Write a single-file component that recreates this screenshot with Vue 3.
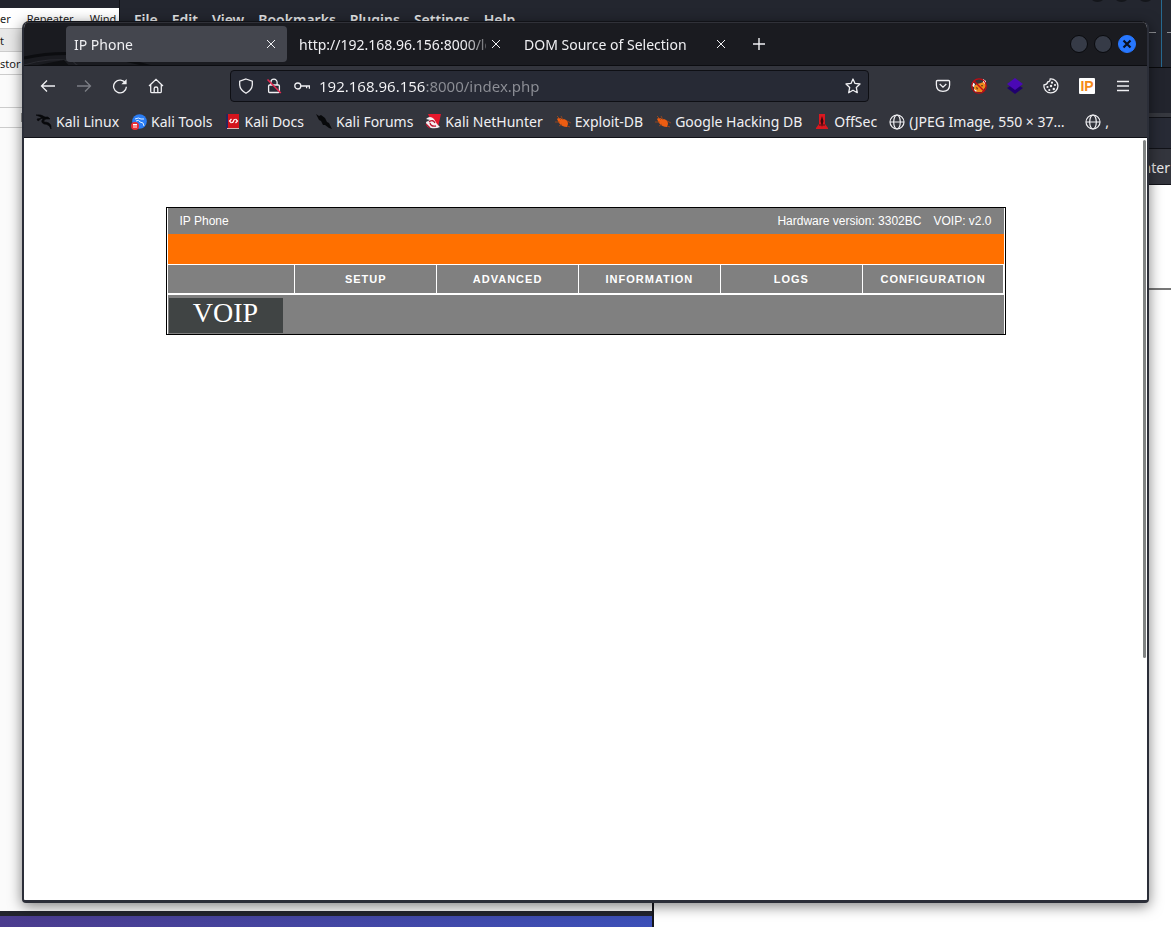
<script setup>
import { ref } from 'vue'

const address = ref('192.168.96.156:8000/index.php')
const tabs = [
  { title: 'IP Phone', active: true },
  { title: 'http://192.168.96.156:8000/lo', active: false },
  { title: 'DOM Source of Selection', active: false }
]
const bookmarks = [
  { label: 'Kali Linux', icon: 'dragon' },
  { label: 'Kali Tools', icon: 'tools' },
  { label: 'Kali Docs', icon: 'docs' },
  { label: 'Kali Forums', icon: 'forums' },
  { label: 'Kali NetHunter', icon: 'hunter' },
  { label: 'Exploit-DB', icon: 'bug' },
  { label: 'Google Hacking DB', icon: 'bug' },
  { label: 'OffSec', icon: 'offsec' },
  { label: '(JPEG Image, 550 × 37…', icon: 'globe', long: true },
  { label: ',', icon: 'globe' }
]
const terminalMenu = ['File', 'Edit', 'View', 'Bookmarks', 'Plugins', 'Settings', 'Help']
const phoneMenu = ['SETUP', 'ADVANCED', 'INFORMATION', 'LOGS', 'CONFIGURATION']
</script>

<template>
  <div class="desktop">
    <section class="terminal">
      <div class="terminal-dots"><i></i><i></i><i></i></div>
      <nav class="terminal-menu">
        <a v-for="m in terminalMenu" :key="m" href="#">{{ m }}</a>
      </nav>
      <div class="terminal-rule"></div>
    </section>

    <section class="proxy">
      <div class="proxy-title"></div>
      <div class="proxy-menu"><span>er</span><span>Repeater</span><span>Wind</span></div>
      <div class="proxy-row shaded">t</div>
      <div class="proxy-row sub">stor</div>
      <div class="proxy-row tall"></div>
      <div class="proxy-row short"><i></i></div>
    </section>

    <section class="rear">
      <div class="rear-tabs"></div>
      <div class="rear-nav"></div>
      <div class="rear-marks">nter</div>
      <div class="rear-page"></div>
    </section>

    <main class="browser">
      <header class="tabbar">
        <svg class="wallpaper" viewBox="0 0 190 42" width="190" height="42" fill="none">
          <path d="M0 35Q28 29 56 31Q92 33 128 44" stroke="#0c0d10" stroke-width="3" />
          <path d="M0 42Q26 34 48 38L56 44M43 31L54 44" stroke="#2a2b31" stroke-width="1" />
          <path d="M4 44L40 37L46 44Z" fill="#0e0f12" />
        </svg>
        <div v-for="t in tabs" :key="t.title" class="tab" :class="{ active: t.active }">
          <button class="tab-title">{{ t.title }}</button>
          <button class="tab-close" aria-label="Close tab">
            <svg viewBox="0 0 10 10" width="10" height="10"><path d="M1 1L9 9M9 1L1 9" stroke="currentColor" stroke-width="1" /></svg>
          </button>
        </div>
        <button class="new-tab" aria-label="New tab">
          <svg viewBox="0 0 14 14" width="14" height="14"><path d="M7 1V13M1 7H13" stroke="currentColor" stroke-width="1.4" /></svg>
        </button>
        <div class="window-buttons">
          <button aria-label="Minimize"></button>
          <button aria-label="Maximize"></button>
          <button class="close" aria-label="Close">
            <svg viewBox="0 0 10 10" width="10" height="10"><path d="M1.500 1.500L8.500 8.500M8.500 1.500L1.500 8.500" stroke="#0a1020" stroke-width="2.200" /></svg>
          </button>
        </div>
      </header>

      <div class="toolbar">
        <div class="nav-buttons">
          <button aria-label="Back"><svg viewBox="0 0 16 16"><path d="M15 8H1.5M7 2.5L1.5 8L7 13.5" /></svg></button>
          <button aria-label="Forward" class="dim"><svg viewBox="0 0 16 16"><path d="M1 8H14.500M9 2.500L14.500 8L9 13.500" /></svg></button>
          <button aria-label="Reload"><svg viewBox="0 0 16 16"><path d="M13.600 5.400A6.400 6.400 0 1 0 14.400 8.800" /><path d="M14.600 1V6.200H9.400Z" fill="currentColor" stroke="none" /></svg></button>
          <button aria-label="Home"><svg viewBox="0 0 16 16"><path d="M1 8L8 1.300L15 8M2.700 6.800V13.500Q2.700 14.700 3.900 14.700H12.100Q13.300 14.700 13.300 13.500V6.800M6.200 14.500V10.500Q6.200 9 8 9Q9.800 9 9.800 10.500V14.500" /></svg></button>
        </div>
        <div class="urlbar">
          <svg viewBox="0 0 16 16"><path d="M8 1L14.300 3.200V7Q14 12 8 15.200Q2 12 1.700 7V3.200Z" /></svg>
          <svg viewBox="0 0 16 16"><path d="M4.900 7V4.300A3.100 3.100 0 0 1 11.100 4.300V7M3.600 7H12.400Q13.400 7 13.400 8V13.400Q13.400 14.500 12.400 14.500H3.600Q2.600 14.500 2.600 13.400V8Q2.600 7 3.600 7Z" /><path d="M1.500 1.500L14.800 15" stroke="#e22850" stroke-width="1.600" /></svg>
          <svg viewBox="0 0 16 16"><circle cx="3.800" cy="8" r="3" /><path d="M6.800 8H15.400V10.700M12.600 8V10.300" /></svg>
          <input v-model="address" class="address" aria-label="Address" spellcheck="false" />
          <button class="star" aria-label="Bookmark this page"><svg viewBox="0 0 16 16"><path d="M8 1L10 5.400L15 6L11.300 9.400L12.300 14.700L8 12.200L3.700 14.700L4.700 9.400L1 6L6 5.400Z" stroke-linejoin="round" /></svg></button>
        </div>
        <div class="extensions">
          <button aria-label="Pocket"><svg viewBox="0 0 16 16"><path d="M2.500 2.500H13.500Q14.600 2.500 14.600 3.600V7Q14.600 13.300 8 13.300Q1.400 13.300 1.400 7V3.600Q1.400 2.500 2.500 2.500ZM4.700 6L8 9.100L11.300 6" /></svg></button>
          <button aria-label="Fox">
            <svg viewBox="0 0 16 16"><path d="M3 8L6 6L10 5L14 3L15 8L11 14L6 14L3 12Z" fill="#f08a1c" stroke="none" /><path d="M1 4L4 6L3 9L1 8ZM12 1L15 3L15 7L12 4ZM3 11L6 13L4 14Z" fill="#fff" stroke="none" /><path d="M5 9L7 10L6 12ZM10 7L12 7L11 9Z" fill="#56331c" stroke="none" /><circle cx="8" cy="8" r="7.200" stroke="#c20b12" stroke-width="1.300" /><path d="M3 3L13 13" stroke="#c20b12" stroke-width="1.400" /></svg>
          </button>
          <button aria-label="Layers"><svg viewBox="0 0 16 16"><path d="M0 10L8 5L16 10L8 16Z" fill="#20006e" stroke="none" /><path d="M0 6L8 0L16 6L8 12Z" fill="#4a08b5" stroke="none" /></svg></button>
          <button aria-label="Cookies"><svg viewBox="0 0 16 16"><path d="M7.200 1Q7.300 3.600 4.700 3.900Q4.300 6.500 1 6.900A7 7 0 1 0 7.200 1Z" /><g fill="currentColor" stroke="none"><circle cx="9" cy="4.700" r="1.100" /><circle cx="12" cy="7" r="1.100" /><circle cx="8" cy="8" r="1.200" /><circle cx="4.500" cy="9" r="1.100" /><circle cx="6.300" cy="12" r="1.100" /><circle cx="10.800" cy="11" r="1.200" /></g></svg></button>
          <button class="ip-badge" aria-label="IP lookup"><span>IP</span></button>
          <button aria-label="Menu"><svg viewBox="0 0 16 16"><path d="M2 3.500H14M2 8H14M2 12.500H14" /></svg></button>
        </div>
      </div>

      <nav class="bookmarks">
        <a v-for="b in bookmarks" :key="b.label" href="#" :class="{ long: b.long }">
          <svg v-if="b.icon === 'dragon'" viewBox="0 0 16 16"><path d="M0 1Q5 0 9 3L12 3L14 5L10 5Q7 6 8 8Q14 8 15 12L15 15Q13 10 8 10Q4 8 7 5Q4 2 0 1ZM1 5L6 4L2 7Z" fill="#08090b" stroke="#08090b" stroke-width=".6" /></svg>
          <svg v-else-if="b.icon === 'tools'" viewBox="0 0 16 16"><circle cx="8.500" cy="7.500" r="7.300" fill="#2a7df5" /><path d="M4 5Q8 3 10 5L13 5M5 7Q8 5 9 8Q13 8 13 12" fill="none" stroke="#dcecff" stroke-width="1" /><circle cx="4" cy="12" r="4" fill="#ec2b32" /><path d="M2 10.500H6M3 10.500V14M5 10.500V14" fill="none" stroke="#fff" /></svg>
          <svg v-else-if="b.icon === 'docs'" viewBox="0 0 16 16"><path d="M1 0H4V15H1Z" fill="#26265d" /><path d="M3 0H14V14H3Z" fill="#d5141d" /><path d="M2 14H14V15H2Z" fill="#dcb4b4" /><path d="M6.500 5L4.500 7L6.500 9M10.500 5L12.500 7L10.500 9M7 8Q8 9 8.500 7Q9 5 10 6" fill="none" stroke="#fff" stroke-width="1.200" /></svg>
          <svg v-else-if="b.icon === 'forums'" viewBox="0 0 16 16"><path d="M0 0L3 2L5 1L9 4L11 8L13 9L16 15L13 14L9 11L7 11L5 7L3 6Z" fill="#08090b" /></svg>
          <svg v-else-if="b.icon === 'hunter'" viewBox="0 0 16 16"><path d="M3 0H16L13 13L7 9Z" fill="#e5172c" /><path d="M1 5Q5 1 9 5L12 10L15 13Q11 15 6 14Q1 13 1 8L5 6Z" fill="#f5eef0" /><path d="M4 8Q8 5 10 9M5 9Q6 13 11 12M1 10L5 14" fill="none" stroke="#bb1530" stroke-width="1.300" /></svg>
          <svg v-else-if="b.icon === 'bug'" viewBox="0 0 16 16"><path d="M2 5Q4 3 7 5Q13 5 13 10L12 13Q7 13 4 9Z" fill="#ed5d12" /><path d="M2 2L6 6M6 2L8 6M0 8L5 8M12 7L16 9M4 12L7 10M12 12L15 13" stroke="#ad4917" stroke-width=".8" /></svg>
          <svg v-else-if="b.icon === 'offsec'" viewBox="0 0 16 16"><path d="M5 0H11V10L14 14V15H2V14L5 10Z" fill="#d91820" /><path d="M8 2L9.500 7L8 13L6.500 7Z" fill="#3b080c" /><path d="M5 11H11" stroke="#5b0c10" /></svg>
          <svg v-else viewBox="0 0 16 16" fill="none" stroke="#f0f0f3" stroke-width="1.200"><circle cx="8" cy="8" r="7" /><ellipse cx="8" cy="8" rx="3.300" ry="7" /><path d="M1 8H15" /></svg>
          <span>{{ b.label }}</span>
        </a>
      </nav>

      <div class="page">
        <div class="scroll-thumb"></div>
        <div class="phone">
          <div class="phone-head">
            <span class="phone-name">IP Phone</span>
            <span>Hardware version: 3302BC</span>
            <span>VOIP: v2.0</span>
          </div>
          <div class="phone-banner"></div>
          <nav class="phone-menu">
            <span></span>
            <a v-for="m in phoneMenu" :key="m" href="#">{{ m }}</a>
          </nav>
          <div class="phone-body"><div class="voip">VOIP</div></div>
        </div>
      </div>
    </main>
  </div>
</template>

<style>
body { margin: 0; overflow: hidden; }
</style>

<style scoped>
* { box-sizing: border-box; }
button { border: 0; padding: 0; background: none; font: inherit; color: inherit; }
a { color: inherit; text-decoration: none; }

.desktop {
  position: relative;
  height: 100vh;
  overflow: hidden;
  background: linear-gradient(90deg, #4b3c8e, #3c50b8 654px);
  font-family: "Noto Sans", sans-serif;
  font-size: 14px;
}

/* windows behind the browser */
.terminal {
  position: absolute;
  top: 0; left: 119px; right: 0;
  height: 120px;
  background: #23262f;
  border-left: 1px solid #101116;
}
.terminal-menu {
  display: flex;
  gap: 14px;
  padding: 10px 14px;
  line-height: 20px;
  font-weight: 600;
  color: #e6e6e8;
}
.terminal-dots { position: absolute; top: -15px; right: 17px; display: flex; gap: 7px; }
.terminal-dots i { width: 17px; height: 17px; border-radius: 50%; background: #14161b; }
.terminal-rule {
  position: absolute;
  top: 0; right: 0;
  width: 24px; height: 68px;
  background:
    linear-gradient(#276a91, #276a91) 14px 0 / 1px 68px no-repeat,
    linear-gradient(#8d8f94, #8d8f94) 0 32px / 9px 1px no-repeat,
    linear-gradient(#8d8f94, #8d8f94) 20px 32px / 4px 1px no-repeat;
}
.proxy {
  position: absolute;
  top: 0; left: 0; bottom: 11px;
  width: 654px;
  clip-path: polygon(0 0, 119px 0, 119px 30px, 100% 30px, 100% 100%, 0 100%);
  background: #fbfbfb;
  border-right: 2px solid #16171d;
  border-bottom: 5px solid #22242d;
  font-family: "Noto Sans", sans-serif;
  font-size: 11px;
  color: #1b1b1b;
}
.proxy-title { height: 8px; background: #22242d; }
.proxy-menu { display: flex; gap: 16px; height: 21px; line-height: 22px; border-bottom: 1px solid #ccc; background: #fff; }
.proxy-row { border-bottom: 1px solid #ccc; height: 23px; line-height: 24px; }
.proxy-row.shaded { background: #e8e8e8; }
.proxy-row.tall { height: 33px; }
.proxy-row.short { height: 20px; padding: 5px 21px; }
.proxy-row.short i { display: block; width: 9px; height: 9px; border: 1px solid #999; }

.rear {
  position: absolute;
  top: 67px; left: 652px; right: 0; bottom: 0;
  display: flex;
  flex-direction: column;
  background: #fff;
  border-left: 2px solid #16171d;
  border-top: 1px solid #090a0c;
}
.rear-tabs { height: 49px; background: #22242d; border-bottom: 4px solid #36383f; }
.rear-nav { height: 32px; background: #272a35; border-top: 1px solid #111218; border-bottom: 1px solid #111218; }
.rear-marks { height: 36px; padding-right: 1px; text-align: right; line-height: 38px; color: #e8e8ea; background: #33353d; border-bottom: 1px solid #111218; }
.rear-page { height: 105px; border-bottom: 2px solid #777; }

/* front window */
.browser {
  position: absolute;
  top: 21px; left: 22px; right: 22px; bottom: 24px;
  display: flex;
  flex-direction: column;
  border: 2px solid #2b2e38;
  border-top: 1px solid #111217;
  border-bottom: 3px solid #2b2e38;
  border-radius: 7px 7px 4px 4px;
  background: #fff;
  box-shadow: 0 3px 14px rgba(0, 0, 0, .5);
  overflow: hidden;
  color: #f0f0f3;
  font-size: 15px;
}
.tabbar {
  position: relative;
  display: flex;
  align-items: center;
  height: 44px;
  padding-left: 42px;
  background: #1a1b20;
  border-top: 1px solid #303138;
  border-bottom: 1px solid #0c0d11;
}
.wallpaper { position: absolute; left: 0; top: 0; overflow: hidden; }
.tab {
  position: relative;
  display: flex;
  align-items: center;
  width: 221px; height: 36px;
  margin-right: 4px;
  padding: 0 6px 0 8px;
  border-radius: 4px;
}
.tab.active { background: #44464e; }
.tab-title {
  flex: 1;
  min-width: 0;
  text-align: left;
  white-space: nowrap;
  overflow: hidden;
  font-size: 14px;
  mask-image: linear-gradient(90deg, #000 165px, transparent 200px);
}
.tab-close { display: grid; place-items: center; width: 20px; height: 20px; }
.new-tab { display: grid; place-items: center; width: 24px; height: 24px; margin-left: 6px; }
.window-buttons { display: flex; gap: 6px; margin-left: auto; padding-right: 11px; }
.window-buttons button {
  display: grid;
  place-items: center;
  width: 18px; height: 18px;
  border: 1px solid #090a0d;
  border-radius: 50%;
  background: #363b47;
}
.window-buttons .close { background: #2777ff; border-color: #2777ff; }

.toolbar {
  display: flex;
  align-items: center;
  height: 40px;
  padding: 0 6px;
  background: #33353d;
}
.toolbar svg { width: 16px; height: 16px; fill: none; stroke: currentColor; stroke-width: 1.3; }
.nav-buttons, .extensions { display: flex; }
.nav-buttons button, .extensions button { display: grid; place-items: center; width: 36px; height: 32px; }
.nav-buttons .dim { color: #7c7e85; }
.urlbar {
  display: flex;
  align-items: center;
  gap: 12px;
  flex: 1;
  height: 32px;
  margin: 0 56px;
  padding: 0 7px;
  border: 1px solid #0e0f14;
  border-radius: 4px;
  background: #272a35;
}
.urlbar svg { flex: none; }
.address {
  flex: 1;
  min-width: 0;
  height: 28px;
  margin-left: -3px;
  padding: 0;
  border: 0;
  outline: 0;
  font: 15px "Noto Sans", sans-serif;
  color: transparent;
  background: linear-gradient(90deg, #f5f5f7 106px, #8d8f96 106px) text;
}
.star { display: grid; }
.ip-badge span {
  width: 16px; height: 16px;
  border-radius: 1px;
  background: #fff;
  color: #f58a17;
  font: bold 14px/16px "Liberation Sans", sans-serif;
}
.bookmarks {
  display: flex;
  align-items: center;
  gap: 12px;
  height: 32px;
  padding: 0 12px;
  background: #33353d;
  border-bottom: 1px solid #111218;
  white-space: nowrap;
  font-size: 14px;
  overflow: hidden;
}
.bookmarks a { display: flex; align-items: center; gap: 4px; }
.bookmarks .long { min-width: 184px; }
.bookmarks svg { width: 16px; height: 16px; }

.page { position: relative; flex: 1; padding: 69px 16px 0; background: #fff; }
.scroll-thumb { position: absolute; top: 2px; right: 1px; width: 3px; height: 68%; border-radius: 2px; background: #808383; }
.phone {
  max-width: 840px;
  margin: 0 auto;
  padding: 0 1px;
  border: 1px solid #000;
  font-family: "Liberation Sans", Arial, sans-serif;
  font-size: 12px;
  color: #fff;
}
.phone-head { display: flex; gap: 12px; padding: 0 12px; line-height: 26px; background: #808080; }
.phone-name { margin-right: auto; }
.phone-banner { height: 30px; background: #ff7000; }
.phone-menu {
  display: grid;
  grid-template-columns: 127fr repeat(5, 141fr);
  gap: 1px;
  padding: 1px 0 2px;
  line-height: 28px;
  text-align: center;
  font-size: 11px;
  font-weight: bold;
  letter-spacing: 1px;
}
.phone-menu > * { background: #808080; }
.phone-body { padding: 3px 1px 1px; background: #808080; }
.voip {
  width: 114px; height: 35px;
  background: #404444;
  text-align: center;
  font: 28px/30px "Liberation Serif", serif;
}
</style>
